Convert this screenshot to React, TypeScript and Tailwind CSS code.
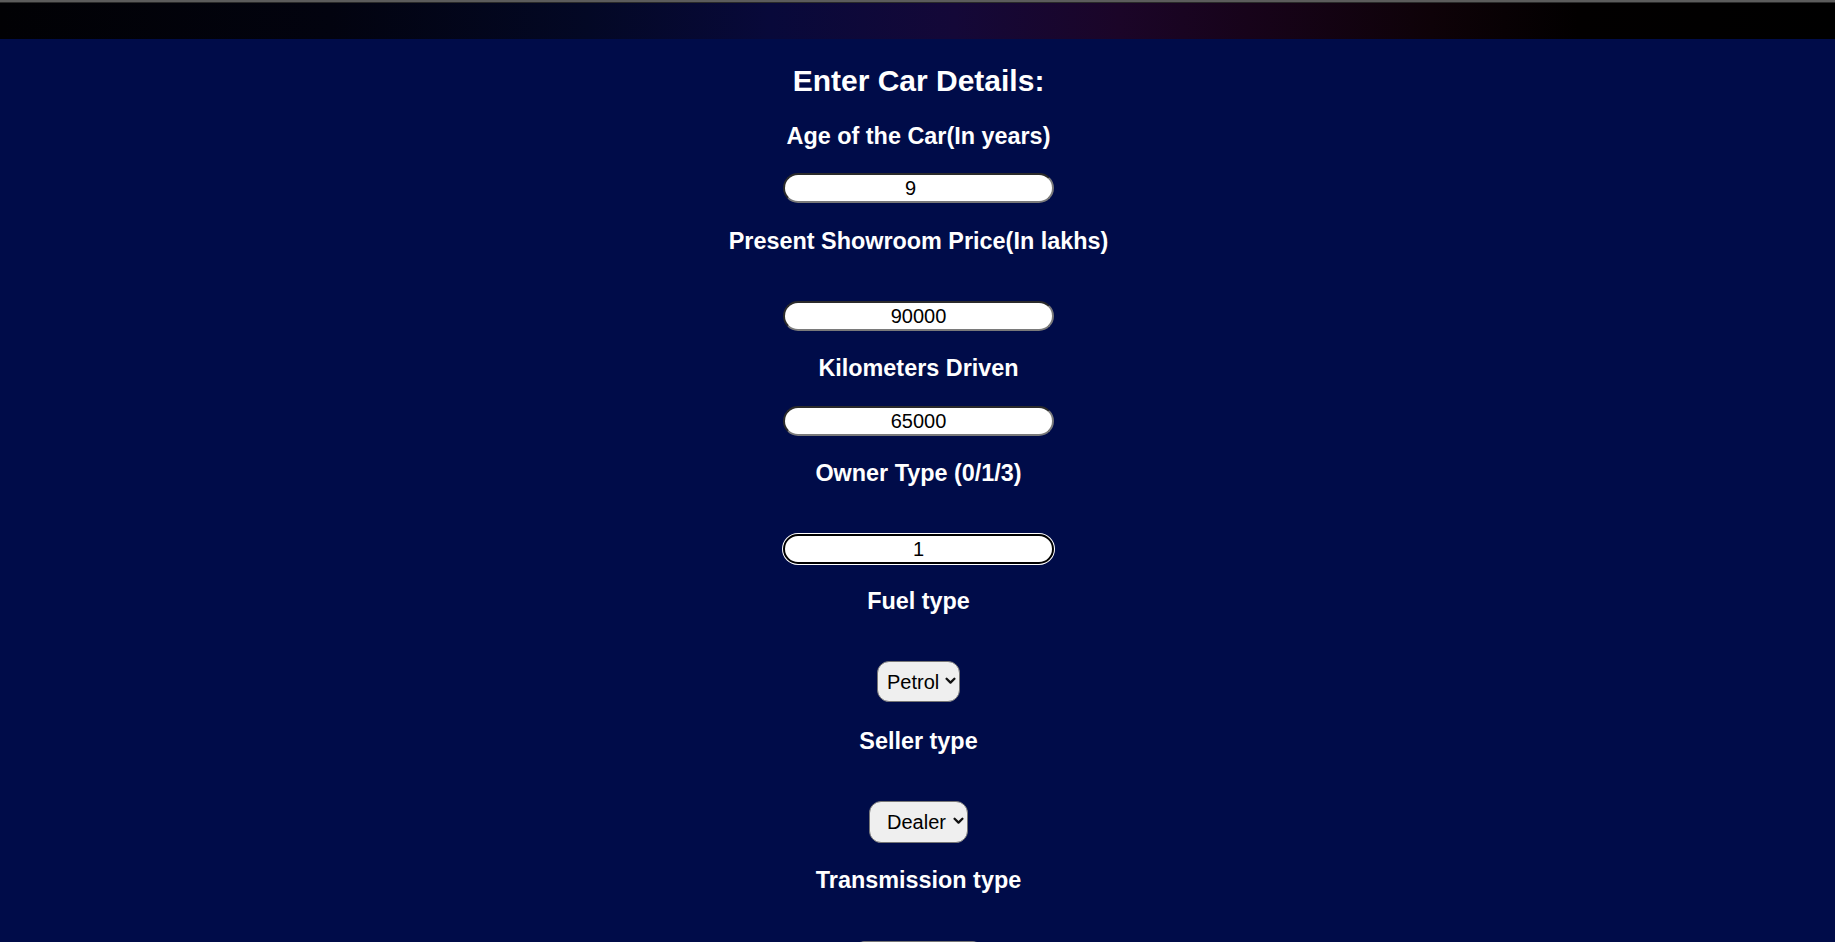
const Label = ({ text, className }: { text: string; className: string }) => (
  <h3 className={`text-[23.4px] leading-[27px] font-bold text-white text-center ${className}`}>{text}</h3>
);

const TextInput = ({ value, className }: { value: string; className: string }) => (
  <input
    type="text"
    defaultValue={value}
    className={`w-[271px] h-[30px] rounded-full bg-white text-black text-[20px] text-center border-2 border-t-[#2b2b2b] border-l-[#2b2b2b] border-r-[#7a7a7a] border-b-[#7a7a7a] outline-none ${className}`}
  />
);

const Chevron = () => (
  <svg width="11" height="8" viewBox="0 0 11 8" className="pointer-events-none absolute right-[4px] top-1/2 -translate-y-[5px]">
    <path d="M1.6 1.8 L5.5 5.6 L9.4 1.8" fill="none" stroke="#111" strokeWidth="2.3" strokeLinecap="round" strokeLinejoin="round" />
  </svg>
);

const Select = ({ options, className }: { options: string[]; className: string }) => (
  <div className="relative">
    <select
      defaultValue={options[0]}
      className={`appearance-none bg-[#efefef] text-black text-[20px] border border-[#767676] rounded-[12px] outline-none ${className}`}
    >
      {options.map((o) => (
        <option key={o}>{o}</option>
      ))}
    </select>
    <Chevron />
  </div>
);

export default function App() {
  return (
    <div className="min-h-screen bg-[#000c49] font-['Liberation_Sans',Arial,sans-serif] overflow-hidden">
      {/* top strip */}
      <div className="h-[2px] bg-[#5c5c5c]" />
      <div className="h-[1px] bg-[#2a2a2a]" />
      <div className="h-[36px] bg-[linear-gradient(to_right,#010104_0%,#02030f_18%,#030825_32%,#08093a_42%,#140838_52%,#1b0528_61%,#17031a_68%,#0e0208_78%,#020000_86%,#000_100%)]" />

      <div className="flex flex-col items-center pl-[2px]">
        <h2 className="mt-[25px] text-[30px] leading-[34px] font-bold text-white">Enter Car Details:</h2>

        <Label text="Age of the Car(In years)" className="mt-[25px]" />
        <TextInput value="9" className="mt-[23px] pr-[16px]" />

        <Label text="Present Showroom Price(In lakhs)" className="mt-[25px]" />
        <TextInput value="90000" className="mt-[46px]" />

        <Label text="Kilometers Driven" className="mt-[24px]" />
        <TextInput value="65000" className="mt-[24px]" />

        <Label text="Owner Type (0/1/3)" className="mt-[24px]" />
        <TextInput value="1" className="mt-[47px] !border-black ring-1 ring-white" />

        <Label text="Fuel type" className="mt-[24px]" />
        <div className="mt-[46px]">
          <Select options={["Petrol", "Diesel", "CNG"]} className="w-[83px] h-[41px] pl-[9px]" />
        </div>

        <Label text="Seller type" className="mt-[26px]" />
        <div className="mt-[46px]">
          <Select options={["Dealer", "Individual"]} className="w-[99px] h-[42px] pl-[17px]" />
        </div>

        <Label text="Transmission type" className="mt-[24px]" />
        <div className="mt-[47px] mb-[40px]">
          <Select options={["Manual", "Automatic"]} className="w-[131px] h-[42px] pl-[17px]" />
        </div>
      </div>
    </div>
  );
}
